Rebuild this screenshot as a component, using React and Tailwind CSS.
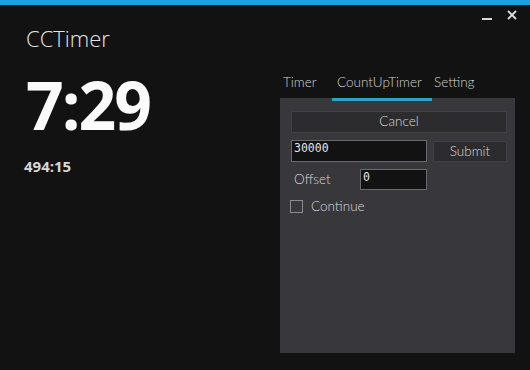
export default function App() {
  const ui = { fontFamily: '"Lato", "Liberation Sans", sans-serif' };
  const mono = { fontFamily: '"DejaVu Sans Mono", "Liberation Mono", monospace' };
  const os = { fontFamily: '"Open Sans", "Noto Sans", sans-serif' };
  return (
    <div className="relative w-[530px] h-[370px] bg-[#121212] overflow-hidden">
      <div className="h-[5px] bg-[#1ba1e2]" />
      {/* window controls */}
      <div className="absolute top-[10px] left-[482px] flex items-start gap-[15px]">
        <svg width="10" height="12" viewBox="0 0 10 12">
          <rect x="0" y="8" width="10" height="2" fill="#d8d8d8" />
        </svg>
        <svg width="10" height="10" viewBox="0 0 10 10">
          <path d="M1 1 L9 9 M9 1 L1 9" stroke="#e0e0e0" strokeWidth="1.8" />
        </svg>
      </div>
      <div className="flex">
        <div className="w-[280px] pl-[26px]" style={os}>
          <div className="mt-[22px] text-[22px] leading-none font-light text-[#e6e6e6]">CCTimer</div>
          <div className="mt-[22px] text-[66px] leading-none font-bold tracking-[-2px] text-[#fbfbfb]">7:29</div>
          <div className="mt-[22px] ml-[-2px] text-[15px] leading-none font-bold text-[#d6d6d6]">494:15</div>
        </div>
        <div className="w-[235px] mt-[69px] font-light" style={ui}>
          <div className="relative z-10 flex text-[13.5px] leading-none text-[#d4d4d4]">
            <div className="w-[52px] h-[27px] pt-[2px] pl-[3px]">Timer</div>
            <div className="w-[100px] h-[27px] pt-[2px] pl-[5px] border-b-[3px] border-[#28a3c9]">CountUpTimer</div>
            <div className="h-[27px] pt-[2px] pl-[2px]">Setting</div>
          </div>
          <div className="-mt-[3px] h-[255px] bg-[#38373c] pl-[11px] pr-[8px] pt-[13px] text-[13.5px] text-[#dadada]">
            <div className="h-[22px] bg-[#2c2c2f] border border-[#414145] flex items-center justify-center leading-none">Cancel</div>
            <div className="mt-[7px] flex">
              <div className="w-[136px] h-[22px] bg-[#121212] border border-[#6a6a6e] pl-[2px] pt-[2px] text-[11.5px] leading-none text-[#e4e4e4] font-normal" style={mono}>30000</div>
              <div className="ml-[6px] mt-[1px] w-[74px] h-[21px] bg-[#2c2c2f] border border-[#414145] flex items-center justify-center leading-none">Submit</div>
            </div>
            <div className="mt-[7px] flex items-center">
              <div className="w-[69px] pl-[3px] leading-none">Offset</div>
              <div className="w-[67px] h-[21px] bg-[#121212] border border-[#6a6a6e] pl-[2px] pt-[2px] text-[11.5px] leading-none text-[#e4e4e4] font-normal" style={mono}>0</div>
            </div>
            <div className="mt-[10px] flex items-center">
              <div className="ml-[-1px] w-[13px] h-[13px] border border-[#8c8c8f]" />
              <div className="ml-[8px] leading-none">Continue</div>
            </div>
          </div>
        </div>
      </div>
    </div>
  );
}
